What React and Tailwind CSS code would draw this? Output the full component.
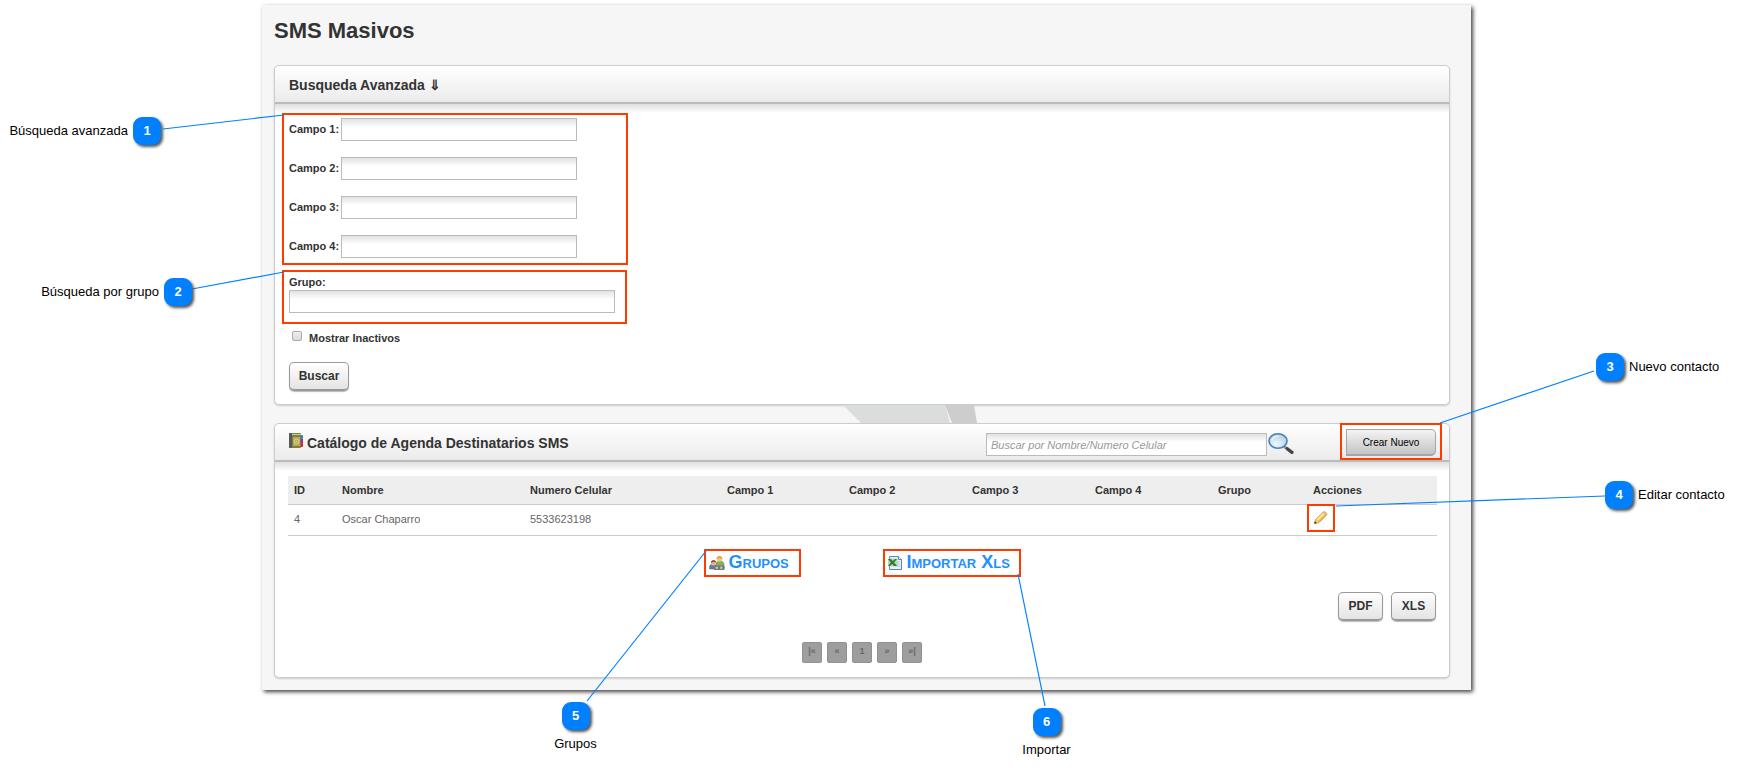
import { useState } from "react";

const FIELDS = ["Campo 1", "Campo 2", "Campo 3", "Campo 4"];

const CONTACTS = [{ id: 4, name: "Oscar Chaparro", phone: "5533623198" }];

const INPUT =
  "h-[23px] border border-[#bbbbbb] bg-linear-to-b from-[#e2e2e2] via-white via-40% to-white px-1 text-[11px] outline-none";

const BUTTON =
  "h-[29px] rounded-[5px] border border-b-2 border-[#999999] bg-linear-to-b from-white to-[#e4e4e4] text-[12px] font-bold text-[#333333] shadow-[0_1px_1px_#bbbbbb]";

const HEADER =
  "flex h-[38px] items-end rounded-t-[5px] border-b-2 border-[#bbbbbb] bg-linear-to-b from-white to-[#ebebeb] pr-[13px] pb-1 pl-[14px]";

const CARD = "rounded-[5px] border border-[#cccccc] bg-white shadow-[0_1px_2px_#cccccc]";

const BODY_SHADE = "bg-linear-to-b from-[#dedede] to-white to-[9px]";

function BookIcon() {
  return (
    <svg width="14" height="15" viewBox="0 0 14 15" aria-hidden="true">
      <rect x="11" y="2" width="3" height="4" rx="1" fill="#0f8fd0" />
      <rect x="11" y="6" width="3" height="4" fill="#b817b0" />
      <rect x="11" y="10" width="3" height="4" rx="1" fill="#e5173f" />
      <rect x="0" y="0" width="12" height="15" rx="1" fill="#7d8038" />
      <rect x="0" y="0" width="3" height="15" rx="1" fill="#555a55" />
      <rect x="3" y="1" width="9" height="1" fill="#c9cba0" />
      <rect x="4" y="4" width="7" height="9" fill="#b5aa58" />
      <circle cx="7.5" cy="8.5" r="2.3" fill="none" stroke="#ddd695" />
      <circle cx="7.5" cy="8.5" r="0.8" fill="#ddd695" />
    </svg>
  );
}

function SearchIcon() {
  return (
    <svg width="28" height="23" viewBox="0 0 28 23" aria-hidden="true">
      <defs>
        <radialGradient id="lens" cx="0.4" cy="0.7" r="0.8">
          <stop offset="0" stopColor="#f3f8fc" />
          <stop offset="1" stopColor="#a9c8e6" />
        </radialGradient>
      </defs>
      <path d="M17 13.5 26 20" stroke="#9a9a9a" strokeWidth="3" />
      <path d="M20 15.5 25 19.5" stroke="#444444" strokeWidth="3" strokeLinecap="round" />
      <ellipse cx="11" cy="8" rx="9" ry="7.2" fill="url(#lens)" stroke="#4a82b4" strokeWidth="1.6" />
      <path d="M5 7c1-3 4-4 7-4" fill="none" stroke="#ffffff" strokeWidth="1.2" opacity="0.8" />
    </svg>
  );
}

function PencilIcon() {
  return (
    <svg width="16" height="16" viewBox="0 0 16 16" aria-hidden="true">
      <path d="M1.5 13.5 2.5 9.8 10.5 2c1.2-.9 3.9 1.3 3.2 2.8L6 12.5z" fill="#f3c04e" stroke="#b98027" strokeWidth="0.9" />
      <path d="M4.2 10 11 3.4" stroke="#fdeaa0" strokeWidth="1.8" />
      <path d="M10 2.8 11 2c1-.8 3.2 1.1 2.6 2.5l-1 1z" fill="#e8b98e" />
      <path d="M1.5 13.5 2.5 9.8 6 12.5z" fill="#ecd2a0" />
      <path d="M1.2 14 2 11 4 13z" fill="#5b4322" />
    </svg>
  );
}

function GroupIcon() {
  return (
    <svg width="16" height="16" viewBox="0 0 16 16" aria-hidden="true">
      <path d="M7 12V9c0-2 2-3 4-3s4 1 4 3v4H7z" fill="#7fb35e" stroke="#5b8a40" strokeWidth="0.5" />
      <circle cx="10.5" cy="4" r="2.7" fill="#f2c391" />
      <path d="M7.4 4C7.4 0 13.4 0 13.6 4 12 2.8 9 2.8 7.4 4z" fill="#e2a42e" />
      <path d="M0.6 14v-2c0-2 1.6-3 3.4-3S8 10 8 12v2z" fill="#5d7fa8" stroke="#44597a" strokeWidth="0.5" />
      <circle cx="4.6" cy="8" r="2.5" fill="#eab688" />
      <path d="M1.8 8C1.8 4.2 7 4.2 7.4 7.6 6 6.8 3.4 6.8 1.8 8z" fill="#93562a" />
      <rect x="4.5" y="10.5" width="11.2" height="4.5" rx="1.5" fill="#777777" />
      <circle cx="7.8" cy="12.7" r="1.3" fill="#c5c5c5" />
      <circle cx="12.3" cy="12.7" r="1.3" fill="#c5c5c5" />
    </svg>
  );
}

function ExcelIcon() {
  return (
    <svg width="16" height="16" viewBox="0 0 16 16" aria-hidden="true">
      <path d="M2.5 1.5h9l3 3v10h-12z" fill="#e6f1fb" stroke="#5787bd" />
      <path d="M11.5 1.5v3h3" fill="#ffffff" stroke="#5787bd" />
      <path d="M10 7h3M10 9h3M10 11h3" stroke="#a9c9ea" />
      <rect x="1" y="3.5" width="9.5" height="8" fill="#b9d8b4" />
      <path d="M1 4h3l1.8 2L8 4h2L7 7.4l3.2 3.6H7L5.2 9 3 11H1l2.8-3.6z" fill="#2f7d32" />
    </svg>
  );
}

// Numbered blue marker used by every callout
function Marker({ number }) {
  return (
    <span className="grid size-7 shrink-0 place-items-center rounded-[9px] bg-[#0080ff] text-[13px] font-bold text-white shadow-[2px_2px_3px_#555555]">
      {number}
    </span>
  );
}

function Callout({ number, text, className }) {
  return (
    <div className={`absolute flex items-center gap-[5px] text-[13px] whitespace-nowrap text-black ${className}`}>
      <Marker number={number} />
      <span>{text}</span>
    </div>
  );
}

// Leader line, drawn from the corner of the frame that it belongs to
function Leader({ x, y, className }) {
  return (
    <svg width="1" height="1" className={`pointer-events-none absolute overflow-visible ${className}`} aria-hidden="true">
      <line x1="0" y1="0" x2={x} y2={y} stroke="#0080ff" strokeWidth="1.2" />
    </svg>
  );
}

export default function App() {
  const [filters, setFilters] = useState({});
  const [group, setGroup] = useState("");
  const [inactive, setInactive] = useState(false);
  const [query, setQuery] = useState("");

  return (
    <div className="min-h-screen bg-white pt-[5px] pb-[80px] font-['Liberation_Sans',Arial,sans-serif]">
      <main className="mr-[270px] ml-[262px] bg-[#f6f6f6] pt-3 pr-[21px] pb-3 pl-3 shadow-[2px_2px_4px_#444444]">
        <h1 className="mb-5 text-[22px] leading-[28px] font-bold text-[#333333]">SMS Masivos</h1>

        <section className={CARD}>
          <div className={HEADER}>
            <h2 className="text-[14px] leading-[26px] font-bold text-[#333333]">Busqueda Avanzada ⇓</h2>
          </div>

          <form
            onSubmit={(e) => e.preventDefault()}
            className={`rounded-b-[5px] pt-[9px] pb-[13px] pl-[7px] text-[11px] font-bold text-[#333333] ${BODY_SHADE}`}
          >
            <div className="relative flex w-[346px] flex-col gap-4 border-2 border-[#ff3b00] pt-[3px] pb-[5px] pl-[5px]">
              {FIELDS.map((f) => (
                <div key={f} className="flex items-center">
                  <label htmlFor={f} className="w-[52px]">{f}:</label>
                  <input
                    id={f}
                    type="text"
                    className={`w-[236px] ${INPUT}`}
                    value={filters[f] || ""}
                    onChange={(e) => setFilters({ ...filters, [f]: e.target.value })}
                  />
                </div>
              ))}
              <Leader x={-121} y={14} className="top-0 left-0" />
              <Callout
                number={1}
                text="Búsqueda avanzada"
                className="top-[2px] right-[465px] flex-row-reverse font-normal"
              />
            </div>

            <div className="relative mt-[5px] w-[345px] border-2 border-[#ff3b00] pt-[3px] pb-[9px] pl-[5px]">
              <label htmlFor="grupo" className="block h-[15px] leading-[14px]">Grupo:</label>
              <input
                id="grupo"
                type="text"
                className={`block w-[326px] ${INPUT}`}
                value={group}
                onChange={(e) => setGroup(e.target.value)}
              />
              <Leader x={-92} y={17} className="top-0 left-0" />
              <Callout
                number={2}
                text="Búsqueda por grupo"
                className="top-[6px] right-[433px] flex-row-reverse font-normal"
              />
            </div>

            <div className="mt-[6px] flex h-4 items-start gap-[7px] pl-[10px]">
              <input
                id="inactivos"
                type="checkbox"
                className="mt-px size-[10px] appearance-none rounded-[2px] border border-[#aaaaaa] bg-linear-to-b from-[#eeeeee] to-[#dcdcdc] checked:bg-[#0080ff]"
                checked={inactive}
                onChange={(e) => setInactive(e.target.checked)}
              />
              <label htmlFor="inactivos" className="leading-4">Mostrar Inactivos</label>
            </div>

            <button type="submit" className={`mt-4 ml-[7px] w-[60px] ${BUTTON}`}>
              Buscar
            </button>
          </form>
        </section>

        <div className="flex h-[18px] justify-center">
          <svg width="134" height="18" viewBox="-67 0 134 18" className="ml-[96px]" aria-hidden="true">
            <path d="M-67 0H35l5 18H-49z" fill="#dbdddc" />
            <path d="M35 0H64l3 18H42z" fill="#cdcdcd" />
          </svg>
        </div>

        <section className={CARD}>
          <div className={HEADER}>
            <span className="mr-1 mb-2">
              <BookIcon />
            </span>
            <h2 className="text-[14px] leading-[26px] font-bold text-[#333333]">
              Catálogo de Agenda Destinatarios SMS
            </h2>
            <input
              type="text"
              aria-label="Buscar por Nombre/Numero Celular"
              placeholder="Buscar por Nombre/Numero Celular"
              className={`ml-auto w-[281px] placeholder:text-[#999999] placeholder:italic ${INPUT}`}
              value={query}
              onChange={(e) => setQuery(e.target.value)}
            />
            <button type="button" aria-label="Buscar" className="mr-[51px]">
              <SearchIcon />
            </button>
            <div className="relative">
              <button
                type="button"
                className="block h-[27px] w-[90px] rounded-r-[5px] border border-b-2 border-[#a5a5a5] bg-linear-to-b from-[#f4f4f4] to-[#c4c4c4] text-[10px] text-black"
              >
                Crear Nuevo
              </button>
              <div className="pointer-events-none absolute -inset-x-[6px] -top-[6px] -bottom-[4px] border-2 border-[#ff3b00]" />
              <Leader x={154} y={-52} className="-top-[6px] -right-[5px]" />
              <Callout number={3} text="Nuevo contacto" className="-top-[76px] left-[250px]" />
            </div>
          </div>

          <div className={`rounded-b-[5px] px-[13px] pt-[14px] pb-[14px] ${BODY_SHADE}`}>
            <table className="w-full table-fixed border-collapse text-left text-[11px]">
              <colgroup>
                <col className="w-[48px]" />
                <col className="w-[188px]" />
                <col className="w-[197px]" />
                <col className="w-[122px]" />
                <col className="w-[123px]" />
                <col className="w-[123px]" />
                <col className="w-[123px]" />
                <col className="w-[95px]" />
                <col className="w-[130px]" />
              </colgroup>
              <thead>
                <tr className="h-[28px] border-b border-[#cccccc] bg-[#eeeeee] text-[#333333]">
                  <th className="pl-[6px]">ID</th>
                  <th className="pl-[6px]">Nombre</th>
                  <th className="pl-[6px]">Numero Celular</th>
                  {FIELDS.map((f) => (
                    <th key={f} className="pl-[6px]">{f}</th>
                  ))}
                  <th className="pl-[6px]">Grupo</th>
                  <th className="pl-[6px]">Acciones</th>
                </tr>
              </thead>
              <tbody>
                {CONTACTS.map((c) => (
                  <tr key={c.id} className="h-[31px] border-b border-[#cccccc] text-[#666666]">
                    <td className="pl-[6px]">{c.id}</td>
                    <td className="pl-[6px]">{c.name}</td>
                    <td className="pl-[6px]">{c.phone}</td>
                    {FIELDS.map((f) => (
                      <td key={f} />
                    ))}
                    <td />
                    <td className="pb-1 pl-[6px]">
                      <div className="relative size-4">
                        <button type="button" aria-label="Editar" className="block">
                          <PencilIcon />
                        </button>
                        <div className="pointer-events-none absolute -inset-[6px] border-2 border-[#ff3b00]" />
                        <Leader x={269} y={-10} className="-top-[4px] -right-[8px]" />
                        <Callout number={4} text="Editar contacto" className="-top-[29px] left-[292px]" />
                      </div>
                    </td>
                  </tr>
                ))}
              </tbody>
            </table>

            <div className="mt-[13px] flex justify-center gap-[82px] text-[18px] font-bold text-[#1e90ff]">
              <div className="relative w-[97px] border-2 border-[#ff3b00]">
                <a href="#grupos" className="flex h-6 items-center gap-1 pl-[3px] whitespace-nowrap [font-variant:small-caps]">
                  <GroupIcon />
                  Grupos
                </a>
                <Leader x={-119} y={150} className="top-0 left-0" />
                <div className="absolute top-[151px] -left-[160px] flex w-[60px] flex-col items-center text-[13px] font-normal text-black">
                  <Marker number={5} />
                  <span className="mt-[6px] leading-4">Grupos</span>
                </div>
              </div>
              <div className="relative w-[138px] border-2 border-[#ff3b00]">
                <a href="#importar" className="flex h-6 items-center gap-1 pl-[2px] whitespace-nowrap [font-variant:small-caps]">
                  <ExcelIcon />
                  Importar Xls
                </a>
                <Leader x={27} y={132} className="right-0 bottom-0" />
                <div className="absolute top-[157px] -right-[58px] flex w-[60px] flex-col items-center text-[13px] font-normal text-black">
                  <Marker number={6} />
                  <span className="mt-[6px] leading-4">Importar</span>
                </div>
              </div>
            </div>

            <div className="mt-[15px] flex justify-end gap-2">
              <button type="button" className={`w-[45px] ${BUTTON}`}>PDF</button>
              <button type="button" className={`w-[45px] ${BUTTON}`}>XLS</button>
            </div>

            <nav className="mt-[21px] flex justify-center gap-[5px]" aria-label="Paginación">
              {["|«", "«", "1", "»", "»|"].map((p) => (
                <button
                  key={p}
                  type="button"
                  className="h-[21px] min-w-5 rounded-[2px] border border-[#919191] bg-[#9e9e9e] px-[5px] text-[9px] font-bold text-[#666666]"
                >
                  {p}
                </button>
              ))}
            </nav>
          </div>
        </section>
      </main>
    </div>
  );
}
